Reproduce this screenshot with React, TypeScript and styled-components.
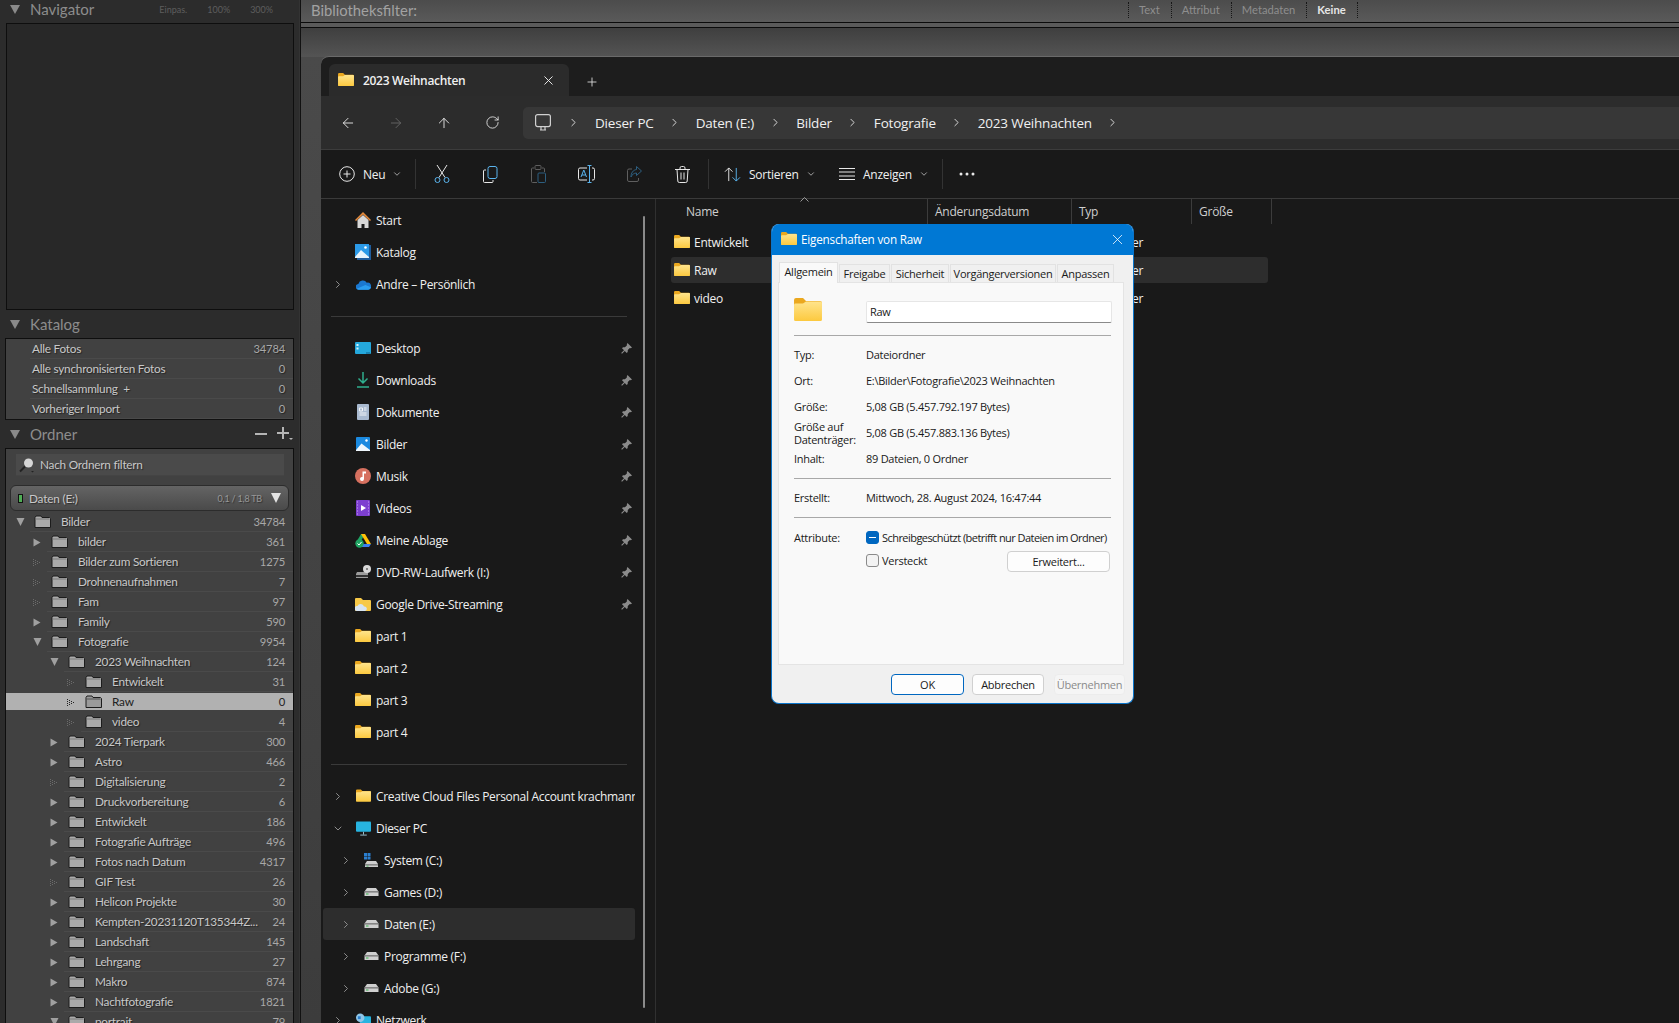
import { FC } from 'react';
import styled, { createGlobalStyle } from 'styled-components';
import { ArrowLeft, ArrowRight, ArrowUp, ChevronDown, ChevronRight, Plus, RotateCw, X } from 'lucide-react';

const GlobalStyle = createGlobalStyle`
  html, body { margin: 0; padding: 0; background: #111; overflow: hidden; }
  * { box-sizing: border-box; }
`;

const Page = styled.div`
  display: flex;
  width: 100%;
  height: 1023px;
  overflow: hidden;
  background: #111;
`;

/* Lightroom left panel */
const LeftPanel = styled.aside`
  width: 300px;
  flex-shrink: 0;
  padding: 0 5px;
  background: #2c2c2c;
  font-family: 'Lato', sans-serif;
  overflow: hidden;
  border-right: 1px solid #333;
`;

const PanelHeader = styled.div<{ $h: number; $clip?: boolean }>`
  display: flex;
  align-items: center;
  height: ${(p) => p.$h}px;
  padding-left: 5px;
  padding-bottom: ${(p) => (p.$clip ? 5 : 0)}px;
  color: #8c8c8c;
  font-size: 15px;
`;

const PanelArrow = styled.span`
  width: 0;
  height: 0;
  margin-right: 10px;
  border-left: 5px solid transparent;
  border-right: 5px solid transparent;
  border-top: 9px solid #8a8a8a;
`;

const ZoomOptions = styled.div`
  display: flex;
  margin-left: auto;
  margin-right: 21px;
  gap: 20px;
  font-size: 9px;
  color: #5e5e5e;
`;

const NavigatorBox = styled.div`
  height: 287px;
  margin: 0 0 0 1px;
  background: #282828;
  border: 1px solid #0e0e0e;
`;

const ListBox = styled.div`
  background: #414141;
  border: 1px solid #0e0e0e;
  border-bottom-color: #111;
`;

const CatalogRow = styled.div`
  display: flex;
  align-items: center;
  justify-content: space-between;
  height: 20px;
  margin-left: 24px;
  padding: 0 8px 0 2px;
  border-bottom: 1px solid #4a4a4a;
  color: #c8c8c8;
  font-size: 11.8px;
  letter-spacing: -0.25px;
  white-space: pre;
  text-shadow: 1px 1px 1px rgba(0, 0, 0, 0.45);
`;

const Count = styled.span<{ $dark?: boolean }>`
  color: ${(p) => (p.$dark ? '#222' : '#a8a8a8')};
  font-size: 11.2px;
  letter-spacing: -0.2px;
`;

const FolderTools = styled.div`
  display: flex;
  align-items: center;
  margin-left: auto;
  margin-right: 1px;
  gap: 10px;
  color: #b5b5b5;
`;

const OrdnerBox = styled(ListBox)`
  height: 576px;
  overflow: hidden;
  border-bottom: none;
`;

const FilterField = styled.div`
  display: flex;
  align-items: center;
  height: 22px;
  margin: 5px 9px 0 10px;
  padding-left: 3px;
  background: #4a4a4a;
  border-bottom: 1px solid #444;
  color: #c8c8c8;
  font-size: 11.8px;
  letter-spacing: -0.25px;
  gap: 5px;
  text-shadow: 1px 1px 1px rgba(0, 0, 0, 0.45);
`;

const VolumeRow = styled.div`
  display: flex;
  align-items: center;
  height: 26px;
  margin: 9px 4px 1px 4px;
  padding: 0 7px;
  border-radius: 6px;
  border: 1px solid #2c2c2c;
  background: linear-gradient(#646464, #4a4a4a);
  color: #c8c8c8;
  font-size: 11.8px;
  letter-spacing: -0.2px;
  text-shadow: 1px 1px 1px rgba(0, 0, 0, 0.45);
`;

const VolumeLed = styled.span`
  width: 5px;
  height: 9px;
  margin-right: 6px;
  background: #4fae55;
  border: 1px solid #111;
`;

const VolumeSize = styled.span`
  margin-left: auto;
  margin-right: 9px;
  color: #989898;
  font-size: 9px;
  letter-spacing: -0.2px;
`;

const VolumeArrow = styled.span`
  width: 0;
  height: 0;
  border-left: 5.5px solid transparent;
  border-right: 5.5px solid transparent;
  border-top: 10px solid #e4e4e4;
`;

const TreeRow = styled.div<{ $depth: number; $selected?: boolean }>`
  display: flex;
  align-items: center;
  height: 20px;
  padding-left: ${(p) => p.$depth * 17 + 10}px;
  background: ${(p) =>
    p.$selected ? 'linear-gradient(transparent 1px, #b1b1b1 1px, #b1b1b1 18px, transparent 18px)' : 'transparent'};
`;

const ArrowSlot = styled.span`
  display: flex;
  width: 14px;
  flex-shrink: 0;
`;

const TreeLine = styled.div<{ $selected?: boolean }>`
  display: flex;
  flex: 1;
  align-items: center;
  height: 20px;
  min-width: 0;
  padding: 0 8px 0 4px;
  border-bottom: 1px solid ${(p) => (p.$selected ? 'transparent' : '#4a4a4a')};
  & > svg { flex-shrink: 0; }
`;

const TreeName = styled.span<{ $selected?: boolean }>`
  flex: 1;
  margin-left: 10px;
  color: ${(p) => (p.$selected ? '#222' : '#c8c8c8')};
  font-size: 11.8px;
  letter-spacing: -0.25px;
  white-space: nowrap;
  text-shadow: ${(p) => (p.$selected ? 'none' : '1px 1px 1px rgba(0, 0, 0, 0.45)')};
`;

/* Lightroom centre + explorer */
const Main = styled.main`
  display: flex;
  flex: 1;
  flex-direction: column;
  min-width: 0;
  background: #111;
  margin-left: 1px;
`;

const FilterBar = styled.div`
  display: flex;
  align-items: center;
  height: 23px;
  flex-shrink: 0;
  padding: 0 0 3px 10px;
  background: linear-gradient(#4c4c4c, #5a5a5a);
  border-bottom: 1px solid #0a0a0a;
  font-family: 'Lato', sans-serif;
`;

const FilterLabel = styled.span`
  width: 817px;
  color: #a2a2a2;
  font-size: 14.8px;
`;

const FilterTab = styled.span<{ $active?: boolean }>`
  padding: 0 11px 0 10px;
  border-left: 1px dotted #161616;
  color: ${(p) => (p.$active ? '#e6e6e6' : '#8e8e8e')};
  font-size: 11.2px;
  font-weight: ${(p) => (p.$active ? 700 : 400)};
  line-height: 16px;
  &:last-child { padding: 0; height: 16px; }
`;

const Strip = styled.div`
  height: 5px;
  flex-shrink: 0;
  background: #5a5a5a;
  border-bottom: 1px solid #0a0a0a;
`;

const Stage = styled.div`
  display: flex;
  flex: 1;
  min-height: 0;
  padding: 28px 0 0 20px;
  background: linear-gradient(#3f3f3f, #545454 29px, #4a4a4a 29px, #3c3c3c);
`;

const ExplorerWindow = styled.section`
  position: relative;
  display: flex;
  flex: 1;
  flex-direction: column;
  min-width: 0;
  border-top: 1px solid #6a6a6a;
  border-top-left-radius: 8px;
  background: #1d1d1d;
  color: #f0f0f0;
  font-family: 'Open Sans', sans-serif;
`;

const TabStrip = styled.div`
  display: flex;
  align-items: flex-end;
  height: 39px;
  flex-shrink: 0;
  padding-left: 8px;
`;

const ActiveTab = styled.div`
  display: flex;
  align-items: center;
  width: 240px;
  height: 32px;
  padding: 0 13px 0 9px;
  background: #2b2b2b;
  border-radius: 6px 6px 0 0;
  font-size: 12px;
  font-weight: 600;
`;

const TabTitle = styled.span`
  flex: 1;
  margin-left: 9px;
  letter-spacing: -0.3px;
`;

const NewTab = styled.span`
  display: flex;
  margin: 0 0 7px 16px;
  color: #dcdcdc;
`;

const AddressBar = styled.div`
  display: flex;
  align-items: center;
  height: 54px;
  flex-shrink: 0;
  padding-left: 19px;
  background: #2c2c2c;
  border-bottom: 1px solid #3c3c3c;
`;

const NavButton = styled.span<{ $dim?: boolean }>`
  display: flex;
  justify-content: center;
  width: 16px;
  margin-right: 32px;
  color: ${(p) => (p.$dim ? '#666' : '#e6e6e6')};
`;

const Breadcrumb = styled.div`
  display: flex;
  flex: 1;
  align-items: center;
  height: 32px;
  margin-left: -9px;
  padding-left: 12px;
  background: #373737;
  border-radius: 5px 0 0 5px;
  font-size: 13.5px;
  letter-spacing: -0.2px;
`;

const Crumb = styled.span`
  white-space: nowrap;
`;

const CrumbSep = styled.span<{ $first?: boolean }>`
  display: flex;
  justify-content: center;
  width: ${(p) => (p.$first ? 44 : 42)}px;
  color: #e0e0e0;
`;

const Toolbar = styled.div`
  display: flex;
  align-items: center;
  height: 49px;
  flex-shrink: 0;
  padding-left: 18px;
  background: #191919;
  border-bottom: 1px solid #3a3a3a;
  font-size: 12px;
  letter-spacing: -0.25px;
`;

const ToolLabelled = styled.span<{ $w: number }>`
  display: flex;
  align-items: center;
  width: ${(p) => p.$w}px;
  flex-shrink: 0;
  gap: 8px;
`;

const ToolIcon = styled.span`
  display: flex;
  justify-content: center;
  width: 48px;
  flex-shrink: 0;
`;

const ToolSep = styled.span<{ $ml?: number; $mr: number }>`
  width: 1px;
  height: 30px;
  flex-shrink: 0;
  margin-left: ${(p) => p.$ml ?? 0}px;
  margin-right: ${(p) => p.$mr}px;
  background: #333;
`;

const SmallChevron = styled.span`
  display: flex;
  margin-left: -1px;
  color: #bbb;
`;

const Body = styled.div`
  display: flex;
  flex: 1;
  min-height: 0;
  background: #191919;
`;

const NavPane = styled.nav`
  position: relative;
  width: 335px;
  flex-shrink: 0;
  padding: 5px 10px 0 2px;
  border-right: 1px solid #303030;
  overflow: hidden;
  font-size: 12px;
  letter-spacing: -0.3px;
`;

const NavScroll = styled.span`
  position: absolute;
  top: 17px;
  left: 322px;
  width: 2px;
  height: 792px;
  background: #8a8a8a;
  border-radius: 1px;
`;

const NavRow = styled.div<{ $depth?: number; $selected?: boolean }>`
  display: flex;
  align-items: center;
  width: 312px;
  height: 32px;
  padding-left: ${(p) => 9 + (p.$depth ?? 0) * 8}px;
  background: ${(p) => (p.$selected ? '#2d2d2d' : 'transparent')};
  border-radius: 3px;
  white-space: nowrap;
  overflow: hidden;
`;

const NavChevron = styled.span`
  display: flex;
  justify-content: center;
  width: 12px;
  flex-shrink: 0;
  margin-right: 12px;
  color: #8c8c8c;
`;

const NavLabel = styled.span`
  flex: 1;
  margin-left: 5px;
`;

const NavDivider = styled.div`
  width: 296px;
  height: 1px;
  margin: 16px 0 15px 8px;
  background: #3a3a3a;
`;

const PinSlot = styled.span`
  display: flex;
  flex-shrink: 0;
  margin-right: 3px;
`;

const ListPane = styled.div`
  flex: 1;
  min-width: 0;
  font-size: 12px;
  letter-spacing: -0.25px;
`;

const ListHeader = styled.div`
  position: relative;
  display: flex;
  height: 30px;
  color: #cfcfcf;
`;

const HeaderCell = styled.div<{ $w: number }>`
  display: flex;
  align-items: center;
  width: ${(p) => p.$w}px;
  height: 25px;
  padding-left: 7px;
  border-right: 1px solid #3c3c3c;
`;

const FirstCell = styled(HeaderCell)`
  padding-left: 30px;
`;

const SortCaret = styled.span`
  position: absolute;
  top: -2px;
  left: 144px;
  display: flex;
  color: #999;
`;

const FileRow = styled.div<{ $selected?: boolean }>`
  display: flex;
  align-items: center;
  width: 597px;
  height: 26px;
  margin: 0 0 2px 15px;
  padding-left: 3px;
  background: ${(p) => (p.$selected ? '#2d2d2d' : 'transparent')};
  border-radius: 3px;
`;

const FileName = styled.span`
  width: 384px;
  margin-left: 4px;
`;

/* Properties dialog */
const Dialog = styled.div`
  position: absolute;
  top: 167px;
  left: 450px;
  display: flex;
  flex-direction: column;
  width: 363px;
  height: 480px;
  background: #f0f0f0;
  border: 1px solid #0a74c9;
  border-top: none;
  border-radius: 8px;
  overflow: hidden;
  color: #1a1a1a;
  font-size: 11px;
  letter-spacing: -0.27px;
`;

const DialogTitle = styled.div`
  display: flex;
  align-items: center;
  height: 31px;
  flex-shrink: 0;
  padding: 0 0 1px 9px;
  background: #0078d4;
  color: #fff;
  font-size: 11.7px;
  letter-spacing: -0.2px;
`;

const DialogTitleText = styled.span`
  flex: 1;
  margin-left: 4px;
`;

const DialogClose = styled.span`
  display: flex;
  margin-right: 7px;
`;

const DialogTabs = styled.div`
  display: flex;
  align-items: flex-end;
  height: 27px;
  padding-left: 7px;
`;

const DialogTab = styled.span<{ $w: number; $active?: boolean }>`
  display: flex;
  align-items: center;
  justify-content: center;
  width: ${(p) => p.$w}px;
  height: ${(p) => (p.$active ? 21 : 18)}px;
  margin-right: 1px;
  background: ${(p) => (p.$active ? '#f9f9f9' : '#f0f0f0')};
  border: 1px solid #e2e2e2;
  border-bottom: none;
  ${(p) => (p.$active ? 'padding-bottom: 2px; margin-bottom: -1px; position: relative; z-index: 1;' : '')}
`;

const DialogPage = styled.div`
  width: 346px;
  height: 384px;
  margin-left: 6px;
  padding: 0 12px 0 15px;
  background: #f9f9f9;
  border: 1px solid #e4e4e4;
`;

const NameRow = styled.div`
  display: flex;
  align-items: flex-start;
  height: 25px;
  margin-top: 15px;
`;

const NameIconSlot = styled.span`
  display: flex;
  width: 72px;
  flex-shrink: 0;
`;

const NameInput = styled.div`
  display: flex;
  align-items: center;
  width: 246px;
  height: 22px;
  flex-shrink: 0;
  margin-top: 3px;
  padding-left: 3px;
  background: #fff;
  border: 1px solid #e6e6e6;
  border-bottom: 1px solid #8a8a8a;
  border-radius: 2px;
`;

const Rule = styled.div<{ $gap: number }>`
  height: 1px;
  margin: ${(p) => p.$gap}px 0 6px;
  background: #a8a8a8;
`;

const InfoRow = styled.div`
  display: flex;
  align-items: center;
  height: 26px;
  white-space: nowrap;
`;

const InfoLabel = styled.span`
  width: 72px;
  flex-shrink: 0;
  line-height: 13px;
  white-space: normal;
`;

const AttrRow = styled.div<{ $h: number; $pushDown?: boolean }>`
  display: flex;
  align-items: center;
  height: ${(p) => p.$h}px;
  padding-top: ${(p) => (p.$pushDown ? 2 : 0)}px;
  white-space: nowrap;
`;

const AttrText = styled.span`
  letter-spacing: -0.55px;
`;

const Check = styled.span<{ $mixed?: boolean }>`
  display: flex;
  align-items: center;
  justify-content: center;
  width: 13px;
  height: 13px;
  margin-right: 3px;
  flex-shrink: 0;
  background: ${(p) => (p.$mixed ? '#0067c0' : '#f3f3f3')};
  border: 1px solid ${(p) => (p.$mixed ? '#0067c0' : '#8a8a8a')};
  border-radius: 3px;
  &::after {
    content: '';
    display: ${(p) => (p.$mixed ? 'block' : 'none')};
    width: 7px;
    height: 1px;
    background: #fff;
  }
`;

const DialogButton = styled.span<{ $w: number; $primary?: boolean; $disabled?: boolean }>`
  display: flex;
  align-items: center;
  justify-content: center;
  width: ${(p) => p.$w}px;
  height: 21px;
  flex-shrink: 0;
  margin-left: ${(p) => (p.$disabled ? 2 : 0)}px;
  background: ${(p) => (p.$disabled ? '#f5f5f5' : '#fdfdfd')};
  border: 1px solid ${(p) => (p.$primary ? '#0067c0' : p.$disabled ? '#ececec' : '#d0d0d0')};
  border-radius: 4px;
  color: ${(p) => (p.$disabled ? '#8a8a8a' : '#1a1a1a')};
`;

const ExtendedButton = styled(DialogButton)`
  margin: 2px 1px 0 auto;
`;

const DialogFooter = styled.div`
  display: flex;
  justify-content: flex-end;
  height: 38px;
  padding: 9px 8px 0 0;
  gap: 8px;
`;

/* Drawings */
const Folder: FC<{ size?: number }> = ({ size = 16 }) => (
  <svg width={size} height={size * 0.82} viewBox="0 0 28 23">
    <defs>
      <linearGradient id="fld" x1="0" y1="0" x2="0" y2="1">
        <stop offset="0" stopColor="#ffe48c" />
        <stop offset="1" stopColor="#fcc93f" />
      </linearGradient>
    </defs>
    <path d="M0 2a2 2 0 0 1 2-2h7l3 3h14a2 2 0 0 1 2 2v4H0z" fill="#eba81f" />
    <path d="M0 7a1.500 1.500 0 0 1 1.500-1.500H9l3-2h14.500A1.500 1.500 0 0 1 28 5v16.500a1.500 1.500 0 0 1-1.500 1.500h-25A1.500 1.500 0 0 1 0 21.500z" fill="url(#fld)" />
  </svg>
);

const LrFolder: FC<{ selected?: boolean }> = ({ selected }) => (
  <svg width="17" height="13" viewBox="0 0 17 13">
    <path d="M1 12.500V2.500L2 1h5l1 1.500h7.500l1 1v9z" fill={selected ? '#9a9a9a' : '#aaa'} stroke="#1c1c1c" />
    <path d="M1.500 4h14" stroke={selected ? '#555' : '#7a7a7a'} />
  </svg>
);

const LrArrow: FC<{ kind: string; selected?: boolean }> = ({ kind, selected }) => {
  if (kind === 'open') {
    return (
      <svg width="9" height="8" viewBox="0 0 9 8">
        <path d="M0.500 0h8L4.500 8z" fill="#a0a0a0" />
      </svg>
    );
  }
  if (kind === 'closed') {
    return (
      <svg width="8" height="9" viewBox="0 0 8 9">
        <path d="M0.500 0.500v8L7.500 4.500z" fill="#a0a0a0" />
      </svg>
    );
  }
  const c = selected ? '#222' : '#6c6c6c';
  return (
    <svg width="8" height="7" viewBox="0 0 8 7" fill={c}>
      {[0, 2, 4, 6].map((y) => <rect key={y} x="0" y={y} width="1" height="1" />)}
      {[1, 3, 5].map((y) => <rect key={y} x="2" y={y} width="1" height="1" />)}
      {[2, 4].map((y) => <rect key={y} x="4" y={y} width="1" height="1" />)}
      <rect x="6" y="3" width="1" height="1" />
    </svg>
  );
};

const Magnifier: FC = () => (
  <svg width="16" height="16" viewBox="0 0 16 16">
    <circle cx="9.500" cy="6" r="4.500" fill="#d6d6d6" />
    <path d="M6 9.500L1 14.500" stroke="#222" strokeWidth="2" />
    <path d="M12 14l1.500 1.500L15 14z" fill="#222" />
  </svg>
);

const Pin: FC = () => (
  <svg width="11" height="11" viewBox="0 0 11 11" fill="#8b8b8b">
    <path d="M6.500 0L11 4.500 9.800 5.200 8.800 5 6.800 7l-.1 2-1 1L3.800 8 1 10.800 0.200 10 3 7.200 1 5.300l1-1 2-.1 2-2-.2-1z" />
  </svg>
);

const NavIcon: FC<{ name: string }> = ({ name }) => {
  switch (name) {
    case 'home':
      return (
        <svg width="16" height="16" viewBox="0 0 16 16">
          <path d="M2.500 8v8h4v-4h3v4h4V8L8 3z" fill="#d8d8d8" />
          <path d="M0 8l8-8 8 8-1 1-7-6.500L1 9z" fill="#e58a3c" />
        </svg>
      );
    case 'catalog':
      return (
        <svg width="16" height="16" viewBox="0 0 16 16">
          <rect x="2" y="1" width="14" height="15" fill="#1f5c9c" />
          <rect x="0" y="0" width="14" height="13" fill="#2b9ae8" />
          <path d="M0 13l6-7 8 7z" fill="#e8f4fc" />
          <rect x="0" y="13" width="14" height="1" fill="#e8f4fc" />
          <circle cx="10.500" cy="3.500" r="1.300" fill="#fff" />
        </svg>
      );
    case 'onedrive':
      return (
        <svg width="16" height="11" viewBox="0 0 16 11">
          <path d="M3 11a3 3 0 0 1-.500-6A5 5 0 0 1 11.500 3.500 3.800 3.800 0 0 1 13 11z" fill="#1b78d0" />
          <path d="M0.800 10a3 3 0 0 0 2.200 1h10a3 3 0 0 0 3-2.500l-6-2.500z" fill="#2a9df0" />
        </svg>
      );
    case 'desktop':
      return (
        <svg width="16" height="12" viewBox="0 0 16 12">
          <rect width="16" height="12" rx="1" fill="#24a8dc" />
          <rect x="1.500" y="2" width="2" height="2" fill="#d9f3fc" />
          <rect x="1.500" y="5.500" width="2" height="2" fill="#d9f3fc" />
          <rect x="11" y="10.500" width="4" height="1" fill="#0d5d88" />
        </svg>
      );
    case 'downloads':
      return (
        <svg width="14" height="16" viewBox="0 0 14 16" fill="none" stroke="#2fae8e" strokeWidth="1.500">
          <path d="M7 0v11M2.500 6.500L7 11l4.500-4.500M1 15h12" />
        </svg>
      );
    case 'docs':
      return (
        <svg width="12" height="16" viewBox="0 0 12 16">
          <rect width="12" height="16" rx="1" fill="#a9bad0" />
          <path d="M2.500 4h3v3h-3zM7 4h2.500M7 6h2.500M2.500 9h7M2.500 11h7" stroke="#f2f5f8" fill="none" />
        </svg>
      );
    case 'pictures':
      return (
        <svg width="14" height="14" viewBox="0 0 14 14">
          <rect width="14" height="14" rx="1" fill="#1b8ae0" />
          <path d="M0 13l5.500-6.500L14 13v1H0z" fill="#eef7fd" />
          <circle cx="10.500" cy="3.500" r="1.200" fill="#fff" />
        </svg>
      );
    case 'music':
      return (
        <svg width="16" height="16" viewBox="0 0 16 16">
          <circle cx="8" cy="8" r="8" fill="#d6705f" />
          <path d="M7.500 3.500h3.500v2H9v5.500a2 2 0 1 1-1.500-2z" fill="#fff" />
        </svg>
      );
    case 'videos':
      return (
        <svg width="14" height="16" viewBox="0 0 14 16">
          <rect width="14" height="16" rx="1" fill="#7d3fd0" />
          <path d="M5 5v6l5-3z" fill="#fff" />
          <path d="M1 2h1M1 5h1M1 8h1M1 11h1M1 14h1M12 2h1M12 5h1M12 8h1M12 11h1M12 14h1" stroke="#c9a6f2" />
        </svg>
      );
    case 'gdrive':
      return (
        <svg width="16" height="15" viewBox="0 0 16 15">
          <path d="M6 1h4l-4 7H2z" fill="#1fa463" />
          <path d="M6 1h4l6 10h-4z" fill="#ffc107" />
          <path d="M6 11h10l-2 3H7z" fill="#3b7ff0" />
          <circle cx="4.500" cy="10.500" r="4.200" fill="#1fa463" />
          <path d="M2.500 10.500l1.500 1.500 2.500-3" stroke="#fff" fill="none" />
        </svg>
      );
    case 'dvd':
      return (
        <svg width="16" height="14" viewBox="0 0 16 14">
          <path d="M2 7h11v6H1v-4z" fill="#9c9c9c" />
          <rect x="1" y="10" width="12" height="2" fill="#333" />
          <circle cx="12" cy="4" r="4" fill="#d8d8d8" />
          <circle cx="12" cy="4" r="1" fill="#666" />
        </svg>
      );
    case 'gstream':
      return (
        <svg width="16" height="13" viewBox="0 0 16 13">
          <path d="M0 1a1 1 0 0 1 1-1h5l2 2h7a1 1 0 0 1 1 1v9a1 1 0 0 1-1 1H1a1 1 0 0 1-1-1z" fill="#f7c948" />
          <path d="M2 13a2.500 2.500 0 0 1 .5-5A3.500 3.500 0 0 1 9 8.500 2.300 2.300 0 0 1 10 13z" fill="#d6e4f2" />
        </svg>
      );
    case 'pc':
      return (
        <svg width="16" height="15" viewBox="0 0 16 15">
          <rect width="16" height="11" rx="1" fill="#27b4e0" />
          <path d="M8 11v3M4.500 14.500h7" stroke="#9ec8d8" />
        </svg>
      );
    case 'network':
      return (
        <svg width="16" height="15" viewBox="0 0 16 15">
          <rect x="4" y="3" width="12" height="9" rx="1" fill="#27b4e0" />
          <circle cx="4.500" cy="4.500" r="4.500" fill="#8fc6e8" />
          <path d="M2 3h3v3H2z" fill="#2b7fd0" />
        </svg>
      );
    case 'system':
      return (
        <svg width="15" height="14" viewBox="0 0 15 14">
          <path d="M3 8h9l2 3v3H1v-3z" fill="#cfcfcf" />
          <rect x="1" y="11.500" width="13" height=".8" fill="#444" />
          <rect x="2.500" y="12.700" width="2" height=".8" fill="#37b34a" />
          <path d="M0 0h3v3H0zM3.500 0h3v3h-3zM0 3.500h3v3H0zM3.500 3.500h3v3h-3z" fill="#2b7fd0" />
        </svg>
      );
    default:
      return (
        <svg width="15" height="8" viewBox="0 0 15 8">
          <path d="M3 0h9l2.500 3.500V8H.5V3.500z" fill="#cfcfcf" />
          <rect x=".5" y="3.500" width="14" height=".8" fill="#3a3a3a" />
          <rect x="2" y="5.500" width="2.500" height="1" fill="#37b34a" />
        </svg>
      );
  }
};

const PcOutline: FC = () => (
  <svg width="16" height="18" viewBox="0 0 16 18" fill="none" stroke="#d0d0d0" strokeWidth="1.200">
    <rect x=".6" y=".6" width="14.800" height="12" rx="2" />
    <path d="M5 16h6M6 13v3M10 13v3" />
  </svg>
);

const CirclePlusIcon: FC = () => (
  <svg width="16" height="16" viewBox="0 0 16 16" fill="none" stroke="#e8e8e8">
    <circle cx="8" cy="8" r="7.300" />
    <path d="M8 4.500v7M4.500 8h7" />
  </svg>
);

const ScissorsIcon: FC = () => (
  <svg width="16" height="18" viewBox="0 0 16 18" fill="none">
    <path d="M3 0l8 12.500M13 0L5 12.500" stroke="#e8e8e8" />
    <circle cx="3.500" cy="15" r="2.500" stroke="#5ab4ee" />
    <circle cx="12.500" cy="15" r="2.500" stroke="#5ab4ee" />
  </svg>
);

const CopyIcon: FC = () => (
  <svg width="15" height="17" viewBox="0 0 15 17" fill="none">
    <path d="M3 4H1.500a1 1 0 0 0-1 1v10.500a1 1 0 0 0 1 1H9a1 1 0 0 0 1-1V14" stroke="#e8e8e8" />
    <rect x="5" y=".5" width="9" height="12" rx="2" stroke="#5ab4ee" />
  </svg>
);

const PasteIcon: FC = () => (
  <svg width="15" height="18" viewBox="0 0 15 18" fill="none">
    <path d="M3 3H1.500a1 1 0 0 0-1 1v12.500a1 1 0 0 0 1 1H6M11 3h1.500a1 1 0 0 1 1 1v3" stroke="#5f5f5f" />
    <rect x="4" y=".5" width="6" height="4" rx="1" stroke="#5f5f5f" />
    <rect x="7" y="8" width="7.500" height="9.500" rx="1" stroke="#2d5f80" />
  </svg>
);

const RenameIcon: FC = () => (
  <svg width="17" height="18" viewBox="0 0 17 18" fill="none">
    <path d="M9 3H2a1.500 1.500 0 0 0-1.500 1.500v9A1.500 1.500 0 0 0 2 15h7M14 3h1a1.500 1.500 0 0 1 1.500 1.500v9A1.500 1.500 0 0 1 15 15h-1" stroke="#e8e8e8" />
    <path d="M9.500.5h4M9.500 17.500h4M11.500.5v17" stroke="#5ab4ee" />
    <path d="M3 12l2.800-7L8.500 12M4 10h3.600" stroke="#5ab4ee" />
  </svg>
);

const ShareIcon: FC = () => (
  <svg width="15" height="16" viewBox="0 0 15 16" fill="none">
    <path d="M5 3H2a1.500 1.500 0 0 0-1.500 1.500v9.500A1.500 1.500 0 0 0 2 15.500h8a1.500 1.500 0 0 0 1.500-1.500v-2" stroke="#5f5f5f" />
    <path d="M9.500.5l5 4.500-5 4.500V7C7 7 5 8.500 4 11c0-4 2-7 5.500-7.500z" stroke="#2d5f80" />
  </svg>
);

const TrashIcon: FC = () => (
  <svg width="15" height="17" viewBox="0 0 15 17" fill="none" stroke="#e8e8e8">
    <path d="M0 3.500h15M5 3.500V2a1.500 1.500 0 0 1 1.500-1.500h2A1.500 1.500 0 0 1 10 2v1.500M2 3.500l.8 11.500a1.500 1.500 0 0 0 1.500 1.500h6.400a1.500 1.500 0 0 0 1.500-1.500L13 3.500M6 6.500v7M9 6.500v7" />
  </svg>
);

const SortIcon: FC = () => (
  <svg width="17" height="15" viewBox="0 0 18 16" fill="none">
    <path d="M5 15V1M1 5l4-4 4 4" stroke="#e8e8e8" />
    <path d="M13 1v14M9 11l4 4 4-4" stroke="#5ab4ee" />
  </svg>
);

const ViewIcon: FC = () => (
  <svg width="16" height="12" viewBox="0 0 16 12" stroke="#e8e8e8">
    <path d="M0 .5h16M0 4h16M0 8h16M0 11.500h16" />
  </svg>
);

const DotsIcon: FC = () => (
  <svg width="16" height="4" viewBox="0 0 16 4" fill="#e8e8e8">
    <circle cx="2" cy="2" r="1.500" />
    <circle cx="8" cy="2" r="1.500" />
    <circle cx="14" cy="2" r="1.500" />
  </svg>
);

/* Data */
const catalogRows = [
  ['Alle Fotos', '34784'],
  ['Alle synchronisierten Fotos', '0'],
  ['Schnellsammlung  +', '0'],
  ['Vorheriger Import', '0'],
];

type TreeItem = { depth: number; arrow: string; name: string; count: string; selected?: boolean };

const treeRows: TreeItem[] = [
  { depth: 0, arrow: 'open', name: 'Bilder', count: '34784' },
  { depth: 1, arrow: 'closed', name: 'bilder', count: '361' },
  { depth: 1, arrow: 'empty', name: 'Bilder zum Sortieren', count: '1275' },
  { depth: 1, arrow: 'empty', name: 'Drohnenaufnahmen', count: '7' },
  { depth: 1, arrow: 'empty', name: 'Fam', count: '97' },
  { depth: 1, arrow: 'closed', name: 'Family', count: '590' },
  { depth: 1, arrow: 'open', name: 'Fotografie', count: '9954' },
  { depth: 2, arrow: 'open', name: '2023 Weihnachten', count: '124' },
  { depth: 3, arrow: 'empty', name: 'Entwickelt', count: '31' },
  { depth: 3, arrow: 'empty', name: 'Raw', count: '0', selected: true },
  { depth: 3, arrow: 'empty', name: 'video', count: '4' },
  { depth: 2, arrow: 'closed', name: '2024 Tierpark', count: '300' },
  { depth: 2, arrow: 'closed', name: 'Astro', count: '466' },
  { depth: 2, arrow: 'empty', name: 'Digitalisierung', count: '2' },
  { depth: 2, arrow: 'closed', name: 'Druckvorbereitung', count: '6' },
  { depth: 2, arrow: 'closed', name: 'Entwickelt', count: '186' },
  { depth: 2, arrow: 'closed', name: 'Fotografie Aufträge', count: '496' },
  { depth: 2, arrow: 'closed', name: 'Fotos nach Datum', count: '4317' },
  { depth: 2, arrow: 'empty', name: 'GIF Test', count: '26' },
  { depth: 2, arrow: 'closed', name: 'Helicon Projekte', count: '30' },
  { depth: 2, arrow: 'closed', name: 'Kempten-20231120T135344Z...', count: '24' },
  { depth: 2, arrow: 'closed', name: 'Landschaft', count: '145' },
  { depth: 2, arrow: 'closed', name: 'Lehrgang', count: '27' },
  { depth: 2, arrow: 'closed', name: 'Makro', count: '874' },
  { depth: 2, arrow: 'closed', name: 'Nachtfotografie', count: '1821' },
  { depth: 2, arrow: 'open', name: 'portrait', count: '79' },
];

const quickAccess = [
  ['desktop', 'Desktop'],
  ['downloads', 'Downloads'],
  ['docs', 'Dokumente'],
  ['pictures', 'Bilder'],
  ['music', 'Musik'],
  ['videos', 'Videos'],
  ['gdrive', 'Meine Ablage'],
  ['dvd', 'DVD-RW-Laufwerk (I:)'],
  ['gstream', 'Google Drive-Streaming'],
];

const drives = ['System (C:)', 'Games (D:)', 'Daten (E:)', 'Programme (F:)', 'Adobe (G:)'];

const NavIconSlot = styled.span`
  display: flex;
  align-items: center;
  justify-content: center;
  width: 16px;
  margin-left: 23px;
  flex-shrink: 0;
`;

const SubIconSlot = styled(NavIconSlot)`
  width: 15px;
  margin-left: 0;
`;

const NavEntry: FC<{ icon?: string; label: string; pinned?: boolean; open?: boolean; arrow?: boolean }> = ({
  icon,
  label,
  pinned,
  open,
  arrow,
}) => (
  <NavRow>
    {arrow && (
      <NavChevron>
        {open ? <ChevronDown size={15} strokeWidth={2} /> : <ChevronRight size={15} strokeWidth={2} />}
      </NavChevron>
    )}
    {arrow ? (
      <SubIconSlot>{icon ? <NavIcon name={icon} /> : <Folder />}</SubIconSlot>
    ) : (
      <NavIconSlot>{icon ? <NavIcon name={icon} /> : <Folder />}</NavIconSlot>
    )}
    <NavLabel>{label}</NavLabel>
    {pinned && (
      <PinSlot>
        <Pin />
      </PinSlot>
    )}
  </NavRow>
);

const App: FC = () => (
  <Page>
    <GlobalStyle />
    <LeftPanel>
      <PanelHeader $h={23} $clip>
        <PanelArrow />
        Navigator
        <ZoomOptions>
          <span>Einpas.</span>
          <span>100%</span>
          <span>300%</span>
        </ZoomOptions>
      </PanelHeader>
      <NavigatorBox />
      <PanelHeader $h={28}>
        <PanelArrow />
        Katalog
      </PanelHeader>
      <ListBox>
        {catalogRows.map(([name, count]) => (
          <CatalogRow key={name}>
            <span>{name}</span>
            <Count>{count}</Count>
          </CatalogRow>
        ))}
      </ListBox>
      <PanelHeader $h={28}>
        <PanelArrow />
        Ordner
        <FolderTools>
          <svg width="12" height="3" viewBox="0 0 12 3"><rect width="12" height="2" fill="#b5b5b5" /></svg>
          <svg width="16" height="14" viewBox="0 0 16 14" fill="#b5b5b5">
            <path d="M5 0h2v5h5v2H7v5H5V7H0V5h5z" />
            <path d="M12 11h4l-2 2z" />
          </svg>
        </FolderTools>
      </PanelHeader>
      <OrdnerBox>
        <FilterField>
          <Magnifier />
          Nach Ordnern filtern
        </FilterField>
        <VolumeRow>
          <VolumeLed />
          Daten (E:)
          <VolumeSize>0,1 / 1,8 TB</VolumeSize>
          <VolumeArrow />
        </VolumeRow>
        {treeRows.map((row) => (
          <TreeRow key={`${row.depth}-${row.name}`} $depth={row.depth} $selected={row.selected}>
            <ArrowSlot>
              <LrArrow kind={row.arrow} selected={row.selected} />
            </ArrowSlot>
            <TreeLine $selected={row.selected}>
              <LrFolder selected={row.selected} />
              <TreeName $selected={row.selected}>{row.name}</TreeName>
              <Count $dark={row.selected}>{row.count}</Count>
            </TreeLine>
          </TreeRow>
        ))}
      </OrdnerBox>
    </LeftPanel>

    <Main>
      <FilterBar>
        <FilterLabel>Bibliotheksfilter:</FilterLabel>
        <FilterTab>Text</FilterTab>
        <FilterTab>Attribut</FilterTab>
        <FilterTab>Metadaten</FilterTab>
        <FilterTab $active>Keine</FilterTab>
        <FilterTab />
      </FilterBar>
      <Strip />
      <Stage>
        <ExplorerWindow>
          <TabStrip>
            <ActiveTab>
              <Folder />
              <TabTitle>2023 Weihnachten</TabTitle>
              <X size={15} strokeWidth={1.5} />
            </ActiveTab>
            <NewTab>
              <Plus size={14} strokeWidth={1.5} />
            </NewTab>
          </TabStrip>
          <AddressBar>
            <NavButton><ArrowLeft size={16} strokeWidth={1.4} /></NavButton>
            <NavButton $dim><ArrowRight size={16} strokeWidth={1.4} /></NavButton>
            <NavButton><ArrowUp size={16} strokeWidth={1.4} /></NavButton>
            <NavButton><RotateCw size={15} strokeWidth={1.4} /></NavButton>
            <Breadcrumb>
              <PcOutline />
              <CrumbSep $first><ChevronRight size={13} strokeWidth={1.7} /></CrumbSep>
              <Crumb>Dieser PC</Crumb>
              <CrumbSep><ChevronRight size={13} strokeWidth={1.7} /></CrumbSep>
              <Crumb>Daten (E:)</Crumb>
              <CrumbSep><ChevronRight size={13} strokeWidth={1.7} /></CrumbSep>
              <Crumb>Bilder</Crumb>
              <CrumbSep><ChevronRight size={13} strokeWidth={1.7} /></CrumbSep>
              <Crumb>Fotografie</Crumb>
              <CrumbSep><ChevronRight size={13} strokeWidth={1.7} /></CrumbSep>
              <Crumb>2023 Weihnachten</Crumb>
              <CrumbSep><ChevronRight size={13} strokeWidth={1.7} /></CrumbSep>
            </Breadcrumb>
          </AddressBar>
          <Toolbar>
            <ToolLabelled $w={76}>
              <CirclePlusIcon />
              Neu
              <SmallChevron><ChevronDown size={10} /></SmallChevron>
            </ToolLabelled>
            <ToolSep $mr={2} />
            <ToolIcon><ScissorsIcon /></ToolIcon>
            <ToolIcon><CopyIcon /></ToolIcon>
            <ToolIcon><PasteIcon /></ToolIcon>
            <ToolIcon><RenameIcon /></ToolIcon>
            <ToolIcon><ShareIcon /></ToolIcon>
            <ToolIcon><TrashIcon /></ToolIcon>
            <ToolSep $ml={2} $mr={15} />
            <ToolLabelled $w={115}>
              <SortIcon />
              Sortieren
              <SmallChevron><ChevronDown size={10} /></SmallChevron>
            </ToolLabelled>
            <ToolLabelled $w={103}>
              <ViewIcon />
              Anzeigen
              <SmallChevron><ChevronDown size={10} /></SmallChevron>
            </ToolLabelled>
            <ToolSep $mr={16} />
            <DotsIcon />
          </Toolbar>
          <Body>
            <NavPane>
              <NavEntry icon="home" label="Start" />
              <NavEntry icon="catalog" label="Katalog" />
              <NavEntry icon="onedrive" label="Andre – Persönlich" arrow />
              <NavDivider />
              {quickAccess.map(([icon, label]) => (
                <NavEntry key={label} icon={icon} label={label} pinned />
              ))}
              {['part 1', 'part 2', 'part 3', 'part 4'].map((label) => (
                <NavEntry key={label} label={label} />
              ))}
              <NavDivider />
              <NavEntry label="Creative Cloud Files Personal Account krachmann" arrow />
              <NavEntry icon="pc" label="Dieser PC" arrow open />
              {drives.map((label, i) => (
                <NavRow key={label} $depth={1} $selected={label === 'Daten (E:)'}>
                  <NavChevron><ChevronRight size={15} strokeWidth={2} /></NavChevron>
                  <SubIconSlot><NavIcon name={i === 0 ? 'system' : 'drive'} /></SubIconSlot>
                  <NavLabel>{label}</NavLabel>
                </NavRow>
              ))}
              <NavEntry icon="network" label="Netzwerk" arrow />
              <NavScroll />
            </NavPane>
            <ListPane>
              <ListHeader>
                <FirstCell $w={272}>Name</FirstCell>
                <HeaderCell $w={144}>Änderungsdatum</HeaderCell>
                <HeaderCell $w={120}>Typ</HeaderCell>
                <HeaderCell $w={80}>Größe</HeaderCell>
                <SortCaret><svg width="9" height="5" viewBox="0 0 9 5" fill="none" stroke="currentColor"><path d="M.5 4.500l4-4 4 4" /></svg></SortCaret>
              </ListHeader>
              <FileRow>
                <Folder />
                <FileName>Entwickelt</FileName>
                <span>Dateiordner</span>
              </FileRow>
              <FileRow $selected>
                <Folder />
                <FileName>Raw</FileName>
                <span>Dateiordner</span>
              </FileRow>
              <FileRow>
                <Folder />
                <FileName>video</FileName>
                <span>Dateiordner</span>
              </FileRow>
            </ListPane>
          </Body>
          <Dialog>
            <DialogTitle>
              <Folder />
              <DialogTitleText>Eigenschaften von Raw</DialogTitleText>
              <DialogClose><X size={17} strokeWidth={1.1} /></DialogClose>
            </DialogTitle>
            <DialogTabs>
              <DialogTab $w={59} $active>Allgemein</DialogTab>
              <DialogTab $w={51}>Freigabe</DialogTab>
              <DialogTab $w={58}>Sicherheit</DialogTab>
              <DialogTab $w={106}>Vorgängerversionen</DialogTab>
              <DialogTab $w={57}>Anpassen</DialogTab>
            </DialogTabs>
            <DialogPage>
              <NameRow>
                <NameIconSlot><Folder size={28} /></NameIconSlot>
                <NameInput>Raw</NameInput>
              </NameRow>
              <Rule $gap={12} />
              <InfoRow><InfoLabel>Typ:</InfoLabel>Dateiordner</InfoRow>
              <InfoRow><InfoLabel>Ort:</InfoLabel>E:\Bilder\Fotografie\2023 Weihnachten</InfoRow>
              <InfoRow><InfoLabel>Größe:</InfoLabel>5,08 GB (5.457.792.197 Bytes)</InfoRow>
              <InfoRow><InfoLabel>Größe auf Datenträger:</InfoLabel>5,08 GB (5.457.883.136 Bytes)</InfoRow>
              <InfoRow><InfoLabel>Inhalt:</InfoLabel>89 Dateien, 0 Ordner</InfoRow>
              <Rule $gap={6} />
              <InfoRow><InfoLabel>Erstellt:</InfoLabel>Mittwoch, 28. August 2024, 16:47:44</InfoRow>
              <Rule $gap={6} />
              <AttrRow $h={26} $pushDown>
                <InfoLabel>Attribute:</InfoLabel>
                <Check $mixed />
                <AttrText>Schreibgeschützt (betrifft nur Dateien im Ordner)</AttrText>
              </AttrRow>
              <AttrRow $h={22}>
                <InfoLabel />
                <Check />
                Versteckt
                <ExtendedButton $w={103}>Erweitert...</ExtendedButton>
              </AttrRow>
            </DialogPage>
            <DialogFooter>
              <DialogButton $w={73} $primary>OK</DialogButton>
              <DialogButton $w={72}>Abbrechen</DialogButton>
              <DialogButton $w={71} $disabled>Übernehmen</DialogButton>
            </DialogFooter>
          </Dialog>
        </ExplorerWindow>
      </Stage>
    </Main>
  </Page>
);

export default App;
